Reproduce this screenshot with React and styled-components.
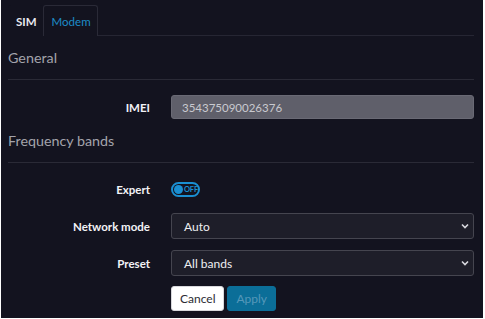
import React from "react";
import styled, { createGlobalStyle } from "styled-components";

const Global = createGlobalStyle`
  html, body { margin: 0; padding: 0; background: #ffffff; }
  body { font-family: Lato, "Open Sans", sans-serif; }
  * { box-sizing: border-box; }
`;

const Panel = styled.div`
  margin: 0 2px 0 1px;
  height: 318px;
  background: #13131f;
  padding: 0 9px 0 7px;
  display: flex;
  flex-direction: column;
`;

const TabBar = styled.div`
  display: flex;
  align-items: flex-end;
  height: 36px;
  border-bottom: 1px solid #262633;
`;

const Tab = styled.div`
  height: 31px;
  display: flex;
  align-items: center;
  padding: ${(p) => (p.$active ? "0 6px 0 8px" : "0 5px 0 7px")};
  font-size: 11.5px;
  font-weight: ${(p) => (p.$active ? 400 : 700)};
  color: ${(p) => (p.$active ? "#1d8cc8" : "#e8e8ee")};
  border: 1px solid ${(p) => (p.$active ? "#2a2a37" : "transparent")};
  border-bottom: none;
  border-radius: 3px 3px 0 0;
  margin-bottom: -1px;
  background: #13131f;
`;

const SectionTitle = styled.div`
  padding: 13px 0 12px 0;
  font-size: 14.3px;
  line-height: 18px;
  color: #a3a3ab;
  border-bottom: 1px solid #2a2a36;
`;

const Row = styled.div`
  display: grid;
  grid-template-columns: 142px 1fr;
  column-gap: 21px;
  align-items: center;
  margin-top: ${(p) => p.$mt || 11}px;
  min-height: ${(p) => p.$h || 26}px;
`;

const Label = styled.label`
  text-align: right;
  font-size: 11.5px;
  font-weight: 700;
  color: #f2f2f6;
`;

const ReadOnly = styled.div`
  height: 24px;
  background: #5f5f6a;
  border: 1px solid #6a6a75;
  border-radius: 3px;
  color: #c9c9cf;
  font-size: 11.5px;
  display: flex;
  align-items: center;
  padding-left: 10px;
`;

const SelectBox = styled.div`
  position: relative;
  height: 26px;
  background: #1e1e29;
  border: 1px solid #45454f;
  border-radius: 3px;
  color: #eeeef2;
  font-size: 12px;
  display: flex;
  align-items: center;
  padding-left: 12px;
`;

const Chevron = styled.svg`
  position: absolute;
  right: 4px;
  top: 50%;
  margin-top: -3px;
`;

const Toggle = styled.div`
  width: 29px;
  height: 15px;
  border: 2px solid #1a8fd2;
  border-radius: 8px;
  display: flex;
  align-items: center;
  padding-left: 1px;
  gap: 1px;
`;

const Knob = styled.span`
  width: 9px;
  height: 9px;
  border-radius: 50%;
  background: #1a8fd2;
`;

const ToggleText = styled.span`
  font-size: 7.5px;
  font-weight: 700;
  color: #1a8fd2;
  letter-spacing: -0.2px;
`;

const Buttons = styled.div`
  display: flex;
  gap: 3px;
`;

const Button = styled.button`
  height: 25px;
  padding: 0 8px;
  border-radius: 3px;
  border: 1px solid ${(p) => (p.$primary ? "#0b6e98" : "#d8d8dc")};
  background: ${(p) => (p.$primary ? "#0b6e98" : "#ffffff")};
  color: ${(p) => (p.$primary ? "#5598ba" : "#2b2b33")};
  font-family: inherit;
  font-size: 12px;
`;

const ChevronIcon = () => (
  <Chevron width="8" height="6" viewBox="0 0 8 6">
    <path d="M1 1.5 L4 4.5 L7 1.5" stroke="#d8d8de" strokeWidth="1.6" fill="none" />
  </Chevron>
);

export default function App() {
  return (
    <>
      <Global />
      <Panel>
        <TabBar>
          <Tab>SIM</Tab>
          <Tab $active>Modem</Tab>
        </TabBar>
        <SectionTitle>General</SectionTitle>
        <Row $mt={15} $h={24}>
          <Label>IMEI</Label>
          <ReadOnly>354375090026376</ReadOnly>
        </Row>
        <SectionTitle>Frequency bands</SectionTitle>
        <Row $mt={13}>
          <Label>Expert</Label>
          <Toggle>
            <Knob />
            <ToggleText>OFF</ToggleText>
          </Toggle>
        </Row>
        <Row>
          <Label>Network mode</Label>
          <SelectBox>
            Auto
            <ChevronIcon />
          </SelectBox>
        </Row>
        <Row>
          <Label>Preset</Label>
          <SelectBox>
            All bands
            <ChevronIcon />
          </SelectBox>
        </Row>
        <Row $mt={10} $h={25}>
          <span />
          <Buttons>
            <Button>Cancel</Button>
            <Button $primary>Apply</Button>
          </Buttons>
        </Row>
      </Panel>
    </>
  );
}
